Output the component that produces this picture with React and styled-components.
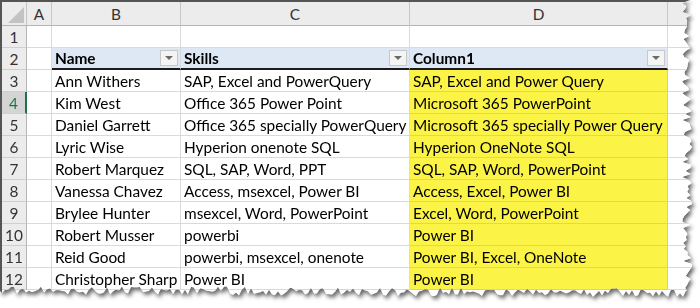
import { createGlobalStyle, styled } from "styled-components";

const GlobalStyle = createGlobalStyle`
  html, body {
    margin: 0;
    padding: 0;
    background: #fff;
  }
  body {
    font-family: Lato, "Liberation Sans", sans-serif;
  }
`;

const Page = styled.div`
  width: 700px;
  height: 308px;
  overflow: hidden;
`;

const Torn = styled.div`
  width: 700px;
  filter: drop-shadow(2px 3px 2px rgba(0, 0, 0, 0.6));
`;

const Sheet = styled.div`
  display: grid;
  grid-template-columns: 25px 25px 129px 229px 258px 40px;
  grid-template-rows: 24px repeat(12, 22px);
  width: 700px;
  height: 302px;
  background: #fff;
  border-top: 2px solid #555;
  border-left: 2px solid #555;
  box-sizing: border-box;
  color: #000;
`;

const Corner = styled.div`
  position: relative;
  background: #ececec;
  border-right: 1px solid #c6c6c6;
  border-bottom: 1px solid #b5b5b5;

  &::after {
    content: "";
    position: absolute;
    right: 2px;
    bottom: 2px;
    width: 16px;
    height: 16px;
    background: #c3c3c3;
    clip-path: polygon(100% 0, 100% 100%, 0 100%);
  }
`;

const ColHead = styled.div`
  display: flex;
  align-items: center;
  justify-content: center;
  background: #ececec;
  border-right: 1px solid #c6c6c6;
  border-bottom: 1px solid #b5b5b5;
  box-sizing: border-box;
  font-size: 15.4px;
  color: #333;
`;

const RowHead = styled.div`
  display: flex;
  align-items: center;
  justify-content: center;
  background: ${(p) => (p.$active ? "#d4d4d4" : "#ececec")};
  border-bottom: 1px solid #cfcfcf;
  border-right: ${(p) => (p.$active ? "2px solid #217346" : "1px solid #b5b5b5")};
  box-sizing: border-box;
  font-size: 15.4px;
  color: ${(p) => (p.$active ? "#217346" : "#333")};
`;

const Cell = styled.div`
  display: flex;
  align-items: center;
  justify-content: space-between;
  gap: 4px;
  padding: 0 2px 0 3px;
  box-sizing: border-box;
  font-size: 15.4px;
  white-space: nowrap;
  overflow: hidden;
  background: ${(p) => (p.$yellow ? "#fbf446" : p.$head ? "#dde8f4" : "#fff")};
  border-right: 1px solid ${(p) => (p.$yellow ? "#e2da45" : "#dadada")};
  border-bottom: ${(p) =>
    p.$head ? "2px solid #1b1b1b" : `1px solid ${p.$yellow ? "#e2da45" : "#dadada"}`};
  font-weight: ${(p) => (p.$head ? 700 : 400)};
`;

const FilterButton = styled.span`
  flex: none;
  width: 18px;
  height: 16px;
  box-sizing: border-box;
  border: 1px solid #c8c8c8;
  background: #f4f4f4;
  display: flex;
  align-items: center;
  justify-content: center;

  &::after {
    content: "";
    border-left: 4px solid transparent;
    border-right: 4px solid transparent;
    border-top: 4px solid #6a6a6a;
  }
`;

const rows = [
  ["Ann Withers", "SAP, Excel and PowerQuery", "SAP, Excel and Power Query"],
  ["Kim West", "Office 365 Power Point", "Microsoft 365 PowerPoint"],
  ["Daniel Garrett", "Office 365 specially PowerQuery", "Microsoft 365 specially Power Query"],
  ["Lyric Wise", "Hyperion onenote SQL", "Hyperion OneNote SQL"],
  ["Robert Marquez", "SQL, SAP, Word, PPT", "SQL, SAP, Word, PowerPoint"],
  ["Vanessa Chavez", "Access, msexcel, Power BI", "Access, Excel, Power BI"],
  ["Brylee Hunter", "msexcel, Word, PowerPoint", "Excel, Word, PowerPoint"],
  ["Robert Musser", "powerbi", "Power BI"],
  ["Reid Good", "powerbi, msexcel, onenote", "Power BI, Excel, OneNote"],
  ["Christopher Sharp", "Power BI", "Power BI"],
];

// jagged torn-paper outline for the right and bottom edges
function tornPath() {
  let seed = 11;
  const rnd = () => {
    seed = (seed * 16807) % 2147483647;
    return (seed - 1) / 2147483646;
  };
  const pts = ["0px 0px", "690px 0px"];
  for (let y = 3; y < 292; y += 3) {
    pts.push(`${(687 + (rnd() - 0.5) * 10).toFixed(1)}px ${y}px`);
  }
  for (let x = 686; x > 0; x -= 3) {
    const base = 290 + (x / 686) * 3;
    pts.push(`${x}px ${(base + (rnd() - 0.5) * 9).toFixed(1)}px`);
  }
  pts.push("0px 291px");
  return `polygon(${pts.join(", ")})`;
}

const clip = tornPath();

export default function App() {
  return (
    <Page>
      <GlobalStyle />
      <Torn>
        <Sheet style={{ clipPath: clip }}>
          <Corner />
          {["A", "B", "C", "D", ""].map((c, i) => (
            <ColHead key={i}>{c}</ColHead>
          ))}

          <RowHead>1</RowHead>
          <Cell />
          <Cell />
          <Cell />
          <Cell />
          <Cell />

          <RowHead>2</RowHead>
          <Cell />
          <Cell $head>
            Name
            <FilterButton />
          </Cell>
          <Cell $head>
            Skills
            <FilterButton />
          </Cell>
          <Cell $head>
            Column1
            <FilterButton />
          </Cell>
          <Cell />

          {rows.map((r, i) => [
            <RowHead key={`h${i}`} $active={i === 1}>
              {i + 3}
            </RowHead>,
            <Cell key={`a${i}`} />,
            <Cell key={`b${i}`}>{r[0]}</Cell>,
            <Cell key={`c${i}`}>{r[1]}</Cell>,
            <Cell key={`d${i}`} $yellow>
              {r[2]}
            </Cell>,
            <Cell key={`e${i}`} />,
          ])}
        </Sheet>
      </Torn>
    </Page>
  );
}
